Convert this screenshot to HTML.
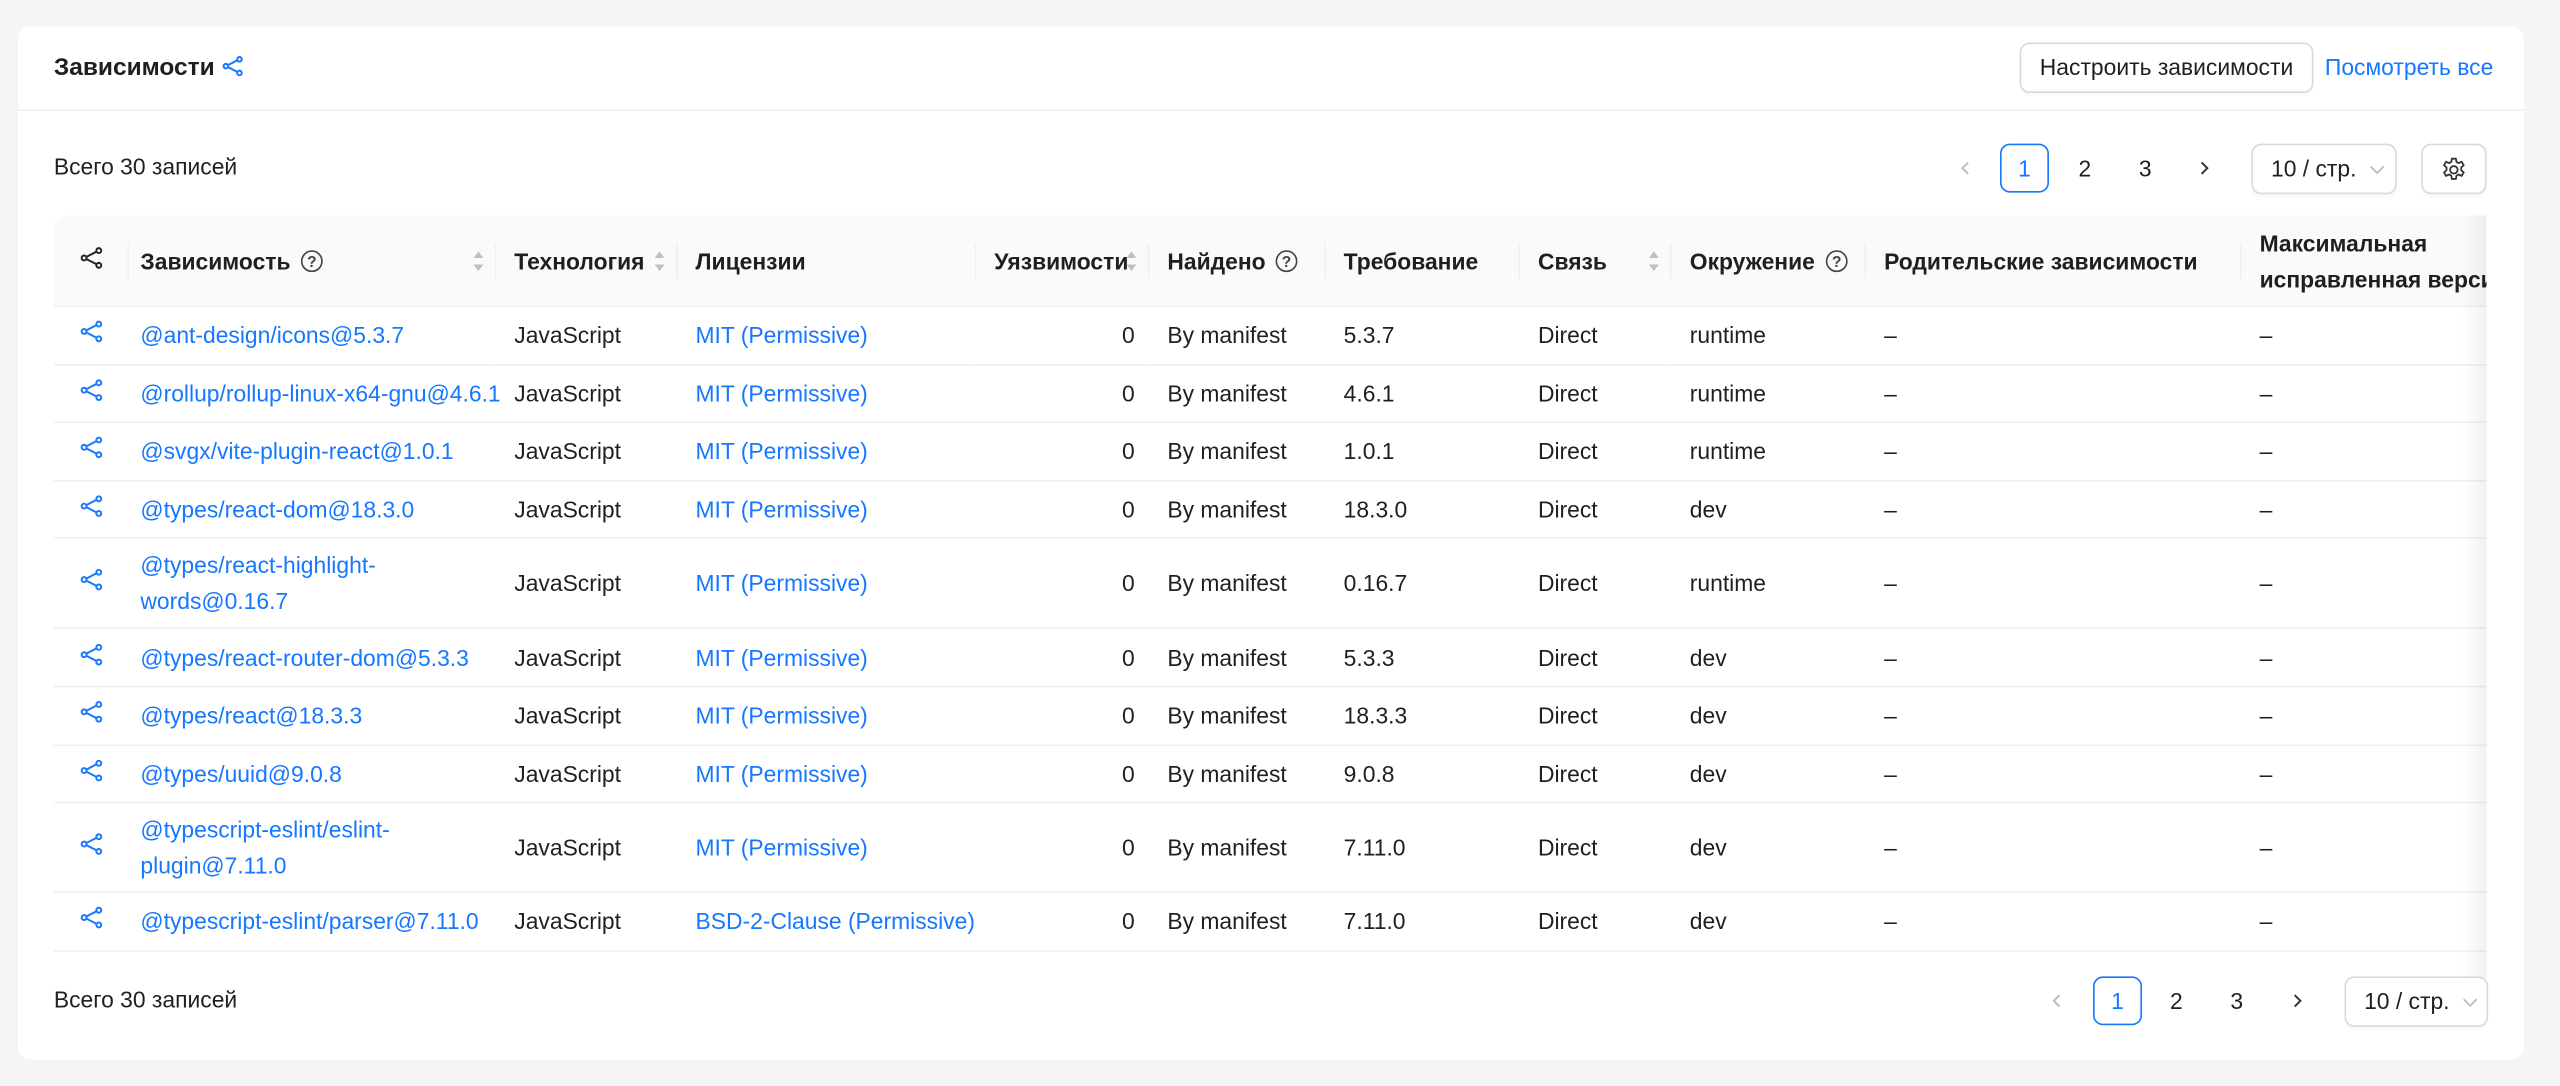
<!DOCTYPE html>
<html><head><meta charset="utf-8">
<style>
html,body{margin:0;padding:0;background:#f5f5f5;}
body{width:2560px;height:1086px;overflow:hidden;}
#w{width:1568px;height:665px;transform:scale(1.63265);transform-origin:0 0;position:relative;font-family:"Liberation Sans",Arial,sans-serif;font-size:14px;color:rgba(0,0,0,.88);}
.card{position:absolute;left:11px;top:16px;width:1535px;height:633px;background:#fff;border-radius:8px;}
.hd{position:absolute;left:0;top:0;right:0;height:51px;border-bottom:1px solid #f0f0f0;}
.title{position:absolute;left:22px;top:17px;font-size:15px;font-weight:bold;}
.btn{position:absolute;border:1px solid #d9d9d9;border-radius:6px;background:#fff;box-sizing:border-box;box-shadow:0 2px 0 rgba(0,0,0,.02);}
.link{color:#1677ff;}
.abs{position:absolute;}
table{border-collapse:collapse;table-layout:fixed;position:absolute;left:22px;top:116px;width:1490px;}
th{background:#fafafa;height:55px;font-weight:bold;text-align:left;padding:0 8px 0 12px;position:relative;border-bottom:1px solid #f0f0f0;white-space:nowrap;}
th:first-child{border-top-left-radius:8px;}
th .sep{position:absolute;left:0;top:50%;margin-top:-11px;height:22px;width:1px;background:#f0f0f0;}
td{padding:0 8px 0 12px;height:34.6px;border-bottom:1px solid #f0f0f0;line-height:22px;white-space:nowrap;}
th:nth-child(1),th:nth-child(2),td:nth-child(1),td:nth-child(2){padding-left:8px;}
tr.t td{height:54px;}
td.r,th.r{text-align:right;}
td a{color:#1677ff;text-decoration:none;}
.q{display:inline-block;vertical-align:-2px;margin-left:6px;}
.sort{position:absolute;right:6px;top:50%;margin-top:-7px;}
.pg{position:absolute;height:30px;line-height:30px;}
.pg span{position:absolute;text-align:center;width:30px;top:0;}
.shadow{position:absolute;left:1496px;top:116px;width:16px;height:467px;background:linear-gradient(to right,rgba(0,0,0,0),rgba(0,0,0,.05));}
</style></head><body><div id="w">
<div class="card">
 <div class="hd">
  <div class="title">Зависимости <svg width="13" height="13" viewBox="0 0 14 14" style="vertical-align:-1px" fill="none" stroke="#1677ff" stroke-width="1.3"><circle cx="2.5" cy="7" r="1.5"/><circle cx="11.5" cy="2.5" r="1.5"/><circle cx="11.5" cy="11.5" r="1.5"/><path d="M4 6.3L10 3.2M4 7.7L10 10.8"/></svg></div>
  <div class="btn" style="left:1226px;top:10px;width:180px;height:31px;line-height:29px;text-align:center;">Настроить зависимости</div>
  <div class="abs link" style="left:1413px;top:17px;">Посмотреть все</div>
 </div>
 <div class="abs" style="left:22px;top:78px;">Всего 30 записей</div>
 <div class="pg" style="left:1176px;top:72px;width:340px;">
  <span style="left:2px"><svg width="10" height="10" viewBox="0 0 10 10" fill="none" stroke="#bbb" stroke-width="1.2"><path d="M6.5 1.5L3 5l3.5 3.5"/></svg></span>
  <span style="left:38px;border:1px solid #1677ff;border-radius:6px;box-sizing:border-box;color:#1677ff;line-height:28px;">1</span>
  <span style="left:75px">2</span>
  <span style="left:112px">3</span>
  <span style="left:148px"><svg width="10" height="10" viewBox="0 0 10 10" fill="none" stroke="#333" stroke-width="1.2"><path d="M3.5 1.5L7 5 3.5 8.5"/></svg></span>
 </div>
 <div class="btn" style="left:1368px;top:72px;width:89px;height:31px;line-height:29px;padding-left:11px;">10 / стр. <svg width="10" height="8" viewBox="0 0 10 8" style="margin-left:4px" fill="none" stroke="#bbb" stroke-width="1.1"><path d="M1 2l4 4 4-4"/></svg></div>
 <div class="btn" style="left:1472px;top:72px;width:40px;height:31px;text-align:center;padding-top:7px;"><svg width="16" height="16" viewBox="0 0 16 16" fill="none" stroke="#333" stroke-width="1.1"><path d="M6.8 1.2h2.4l.4 2 1.3.7 1.9-.8 1.2 2.1-1.5 1.4v1.6l1.5 1.4-1.2 2.1-1.9-.8-1.3.7-.4 2H6.8l-.4-2-1.3-.7-1.9.8-1.2-2.1 1.5-1.4V6.6L2 5.2l1.2-2.1 1.9.8 1.3-.7z"/><circle cx="8" cy="8" r="2.3"/></svg></div>

 <table>
  <colgroup><col style="width:45px"><col style="width:225px"><col style="width:111px"><col style="width:183px"><col style="width:106px"><col style="width:108px"><col style="width:119px"><col style="width:93px"><col style="width:119px"><col style="width:230px"><col style="width:151px"></colgroup>
  <tr>
   <th style="text-align:center"><svg width="14" height="14" viewBox="0 0 14 14" fill="none" stroke="#222" stroke-width="1.2"><circle cx="2.5" cy="7" r="1.5"/><circle cx="11.5" cy="2.5" r="1.5"/><circle cx="11.5" cy="11.5" r="1.5"/><path d="M4 6.3L10 3.2M4 7.7L10 10.8"/></svg></th>
   <th><span class="sep"></span>Зависимость<svg class="q" width="14" height="14" viewBox="0 0 14 14"><circle cx="7" cy="7" r="6.2" fill="none" stroke="#444" stroke-width="1"/><text x="7" y="10.5" font-size="9.5" text-anchor="middle" fill="#444" font-family="Liberation Sans">?</text></svg><svg class="sort" width="8" height="14" viewBox="0 0 8 14"><path d="M4 1l3 4H1z M4 13l3-4H1z" fill="#bfbfbf"/></svg></th>
   <th><span class="sep"></span>Технология<svg class="sort" width="8" height="14" viewBox="0 0 8 14"><path d="M4 1l3 4H1z M4 13l3-4H1z" fill="#bfbfbf"/></svg></th>
   <th><span class="sep"></span>Лицензии</th>
   <th class="r" style="padding-right:19px"><span class="sep"></span>Уязвимости<svg class="sort" width="8" height="14" viewBox="0 0 8 14"><path d="M4 1l3 4H1z M4 13l3-4H1z" fill="#bfbfbf"/></svg></th>
   <th><span class="sep"></span>Найдено<svg class="q" width="14" height="14" viewBox="0 0 14 14"><circle cx="7" cy="7" r="6.2" fill="none" stroke="#444" stroke-width="1"/><text x="7" y="10.5" font-size="9.5" text-anchor="middle" fill="#444" font-family="Liberation Sans">?</text></svg></th>
   <th><span class="sep"></span>Требование</th>
   <th><span class="sep"></span>Связь<svg class="sort" width="8" height="14" viewBox="0 0 8 14"><path d="M4 1l3 4H1z M4 13l3-4H1z" fill="#bfbfbf"/></svg></th>
   <th><span class="sep"></span>Окружение<svg class="q" width="14" height="14" viewBox="0 0 14 14"><circle cx="7" cy="7" r="6.2" fill="none" stroke="#444" stroke-width="1"/><text x="7" y="10.5" font-size="9.5" text-anchor="middle" fill="#444" font-family="Liberation Sans">?</text></svg></th>
   <th><span class="sep"></span>Родительские зависимости</th>
   <th style="white-space:normal;line-height:22px;overflow:hidden"><span class="sep"></span><span style="white-space:nowrap">Максимальная<br>исправленная версия</span></th>
  </tr>
  <tr><td style="text-align:center"><svg width="14" height="14" viewBox="0 0 14 14" fill="none" stroke="#1677ff" stroke-width="1.2"><circle cx="2.5" cy="7" r="1.5"/><circle cx="11.5" cy="2.5" r="1.5"/><circle cx="11.5" cy="11.5" r="1.5"/><path d="M4 6.3L10 3.2M4 7.7L10 10.8"/></svg></td><td><a>@ant-design/icons@5.3.7</a></td><td>JavaScript</td><td><a>MIT (Permissive)</a></td><td class="r">0</td><td>By manifest</td><td>5.3.7</td><td>Direct</td><td>runtime</td><td>–</td><td>–</td></tr>
  <tr><td style="text-align:center"><svg width="14" height="14" viewBox="0 0 14 14" fill="none" stroke="#1677ff" stroke-width="1.2"><circle cx="2.5" cy="7" r="1.5"/><circle cx="11.5" cy="2.5" r="1.5"/><circle cx="11.5" cy="11.5" r="1.5"/><path d="M4 6.3L10 3.2M4 7.7L10 10.8"/></svg></td><td><a>@rollup/rollup-linux-x64-gnu@4.6.1</a></td><td>JavaScript</td><td><a>MIT (Permissive)</a></td><td class="r">0</td><td>By manifest</td><td>4.6.1</td><td>Direct</td><td>runtime</td><td>–</td><td>–</td></tr>
  <tr><td style="text-align:center"><svg width="14" height="14" viewBox="0 0 14 14" fill="none" stroke="#1677ff" stroke-width="1.2"><circle cx="2.5" cy="7" r="1.5"/><circle cx="11.5" cy="2.5" r="1.5"/><circle cx="11.5" cy="11.5" r="1.5"/><path d="M4 6.3L10 3.2M4 7.7L10 10.8"/></svg></td><td><a>@svgx/vite-plugin-react@1.0.1</a></td><td>JavaScript</td><td><a>MIT (Permissive)</a></td><td class="r">0</td><td>By manifest</td><td>1.0.1</td><td>Direct</td><td>runtime</td><td>–</td><td>–</td></tr>
  <tr><td style="text-align:center"><svg width="14" height="14" viewBox="0 0 14 14" fill="none" stroke="#1677ff" stroke-width="1.2"><circle cx="2.5" cy="7" r="1.5"/><circle cx="11.5" cy="2.5" r="1.5"/><circle cx="11.5" cy="11.5" r="1.5"/><path d="M4 6.3L10 3.2M4 7.7L10 10.8"/></svg></td><td><a>@types/react-dom@18.3.0</a></td><td>JavaScript</td><td><a>MIT (Permissive)</a></td><td class="r">0</td><td>By manifest</td><td>18.3.0</td><td>Direct</td><td>dev</td><td>–</td><td>–</td></tr>
  <tr class="t"><td style="text-align:center"><svg width="14" height="14" viewBox="0 0 14 14" fill="none" stroke="#1677ff" stroke-width="1.2"><circle cx="2.5" cy="7" r="1.5"/><circle cx="11.5" cy="2.5" r="1.5"/><circle cx="11.5" cy="11.5" r="1.5"/><path d="M4 6.3L10 3.2M4 7.7L10 10.8"/></svg></td><td><a>@types/react-highlight-<br>words@0.16.7</a></td><td>JavaScript</td><td><a>MIT (Permissive)</a></td><td class="r">0</td><td>By manifest</td><td>0.16.7</td><td>Direct</td><td>runtime</td><td>–</td><td>–</td></tr>
  <tr><td style="text-align:center"><svg width="14" height="14" viewBox="0 0 14 14" fill="none" stroke="#1677ff" stroke-width="1.2"><circle cx="2.5" cy="7" r="1.5"/><circle cx="11.5" cy="2.5" r="1.5"/><circle cx="11.5" cy="11.5" r="1.5"/><path d="M4 6.3L10 3.2M4 7.7L10 10.8"/></svg></td><td><a>@types/react-router-dom@5.3.3</a></td><td>JavaScript</td><td><a>MIT (Permissive)</a></td><td class="r">0</td><td>By manifest</td><td>5.3.3</td><td>Direct</td><td>dev</td><td>–</td><td>–</td></tr>
  <tr><td style="text-align:center"><svg width="14" height="14" viewBox="0 0 14 14" fill="none" stroke="#1677ff" stroke-width="1.2"><circle cx="2.5" cy="7" r="1.5"/><circle cx="11.5" cy="2.5" r="1.5"/><circle cx="11.5" cy="11.5" r="1.5"/><path d="M4 6.3L10 3.2M4 7.7L10 10.8"/></svg></td><td><a>@types/react@18.3.3</a></td><td>JavaScript</td><td><a>MIT (Permissive)</a></td><td class="r">0</td><td>By manifest</td><td>18.3.3</td><td>Direct</td><td>dev</td><td>–</td><td>–</td></tr>
  <tr><td style="text-align:center"><svg width="14" height="14" viewBox="0 0 14 14" fill="none" stroke="#1677ff" stroke-width="1.2"><circle cx="2.5" cy="7" r="1.5"/><circle cx="11.5" cy="2.5" r="1.5"/><circle cx="11.5" cy="11.5" r="1.5"/><path d="M4 6.3L10 3.2M4 7.7L10 10.8"/></svg></td><td><a>@types/uuid@9.0.8</a></td><td>JavaScript</td><td><a>MIT (Permissive)</a></td><td class="r">0</td><td>By manifest</td><td>9.0.8</td><td>Direct</td><td>dev</td><td>–</td><td>–</td></tr>
  <tr class="t"><td style="text-align:center"><svg width="14" height="14" viewBox="0 0 14 14" fill="none" stroke="#1677ff" stroke-width="1.2"><circle cx="2.5" cy="7" r="1.5"/><circle cx="11.5" cy="2.5" r="1.5"/><circle cx="11.5" cy="11.5" r="1.5"/><path d="M4 6.3L10 3.2M4 7.7L10 10.8"/></svg></td><td><a>@typescript-eslint/eslint-<br>plugin@7.11.0</a></td><td>JavaScript</td><td><a>MIT (Permissive)</a></td><td class="r">0</td><td>By manifest</td><td>7.11.0</td><td>Direct</td><td>dev</td><td>–</td><td>–</td></tr>
  <tr><td style="text-align:center"><svg width="14" height="14" viewBox="0 0 14 14" fill="none" stroke="#1677ff" stroke-width="1.2"><circle cx="2.5" cy="7" r="1.5"/><circle cx="11.5" cy="2.5" r="1.5"/><circle cx="11.5" cy="11.5" r="1.5"/><path d="M4 6.3L10 3.2M4 7.7L10 10.8"/></svg></td><td><a>@typescript-eslint/parser@7.11.0</a></td><td>JavaScript</td><td><a>BSD-2-Clause (Permissive)</a></td><td class="r">0</td><td>By manifest</td><td>7.11.0</td><td>Direct</td><td>dev</td><td>–</td><td>–</td></tr>
 </table>
 <div class="shadow"></div>

 <div class="abs" style="left:22px;top:588px;">Всего 30 записей</div>
 <div class="pg" style="left:1232px;top:582px;width:210px;">
  <span style="left:2px"><svg width="10" height="10" viewBox="0 0 10 10" fill="none" stroke="#bbb" stroke-width="1.2"><path d="M6.5 1.5L3 5l3.5 3.5"/></svg></span>
  <span style="left:39px;border:1px solid #1677ff;border-radius:6px;box-sizing:border-box;color:#1677ff;line-height:28px;">1</span>
  <span style="left:75px">2</span>
  <span style="left:112px">3</span>
  <span style="left:149px"><svg width="10" height="10" viewBox="0 0 10 10" fill="none" stroke="#333" stroke-width="1.2"><path d="M3.5 1.5L7 5 3.5 8.5"/></svg></span>
 </div>
 <div class="btn" style="left:1425px;top:582px;width:88px;height:31px;line-height:29px;padding-left:11px;">10 / стр. <svg width="10" height="8" viewBox="0 0 10 8" style="margin-left:4px" fill="none" stroke="#bbb" stroke-width="1.1"><path d="M1 2l4 4 4-4"/></svg></div>
</div>
</div></body></html>
